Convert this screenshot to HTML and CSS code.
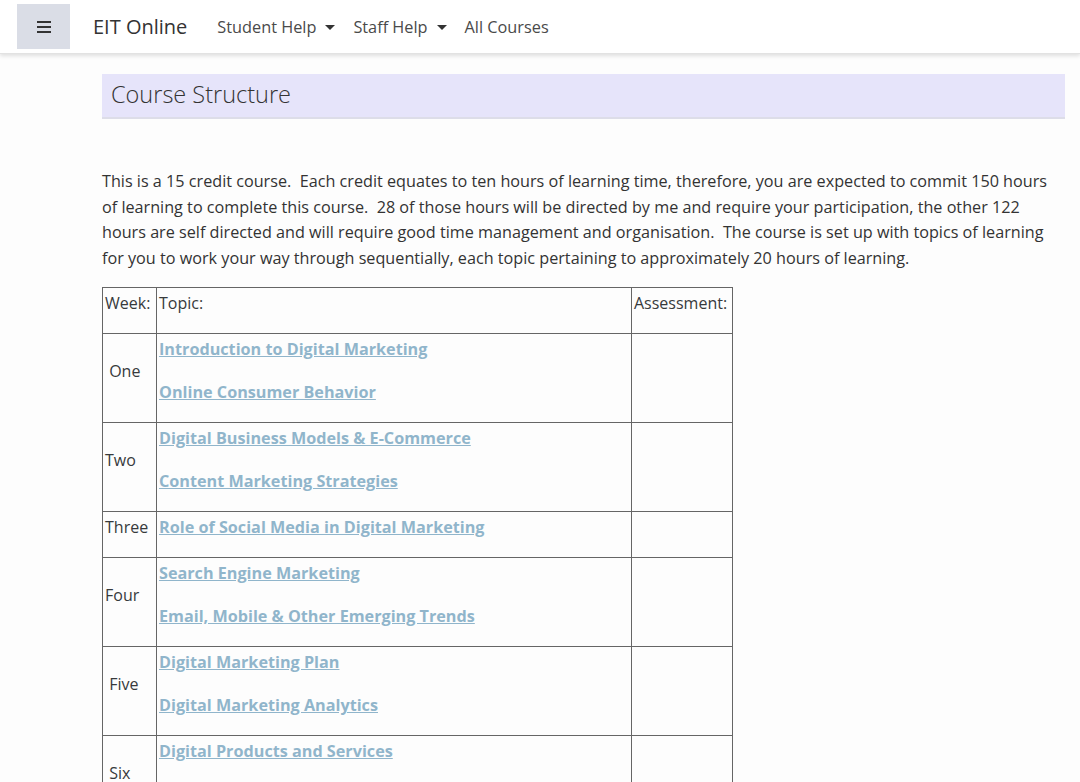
FILE: index.html
```html
<!DOCTYPE html>
<html lang="en">
<head>
    <meta charset="UTF-8">
    <title>Course Structure</title>
    <link rel="stylesheet" href="styles.css">
</head>
<body>

    <nav class="navbar">
        <button class="drawer-toggle" aria-label="Menu">
            <span></span><span></span><span></span>
        </button>
        <a href="#" class="brand">EIT Online</a>
        <a href="#" class="nav-link dropdown">Student Help</a>
        <a href="#" class="nav-link dropdown">Staff Help</a>
        <a href="#" class="nav-link">All Courses</a>
    </nav>

    <main class="content">
        <h2 class="section-title">Course Structure</h2>

        <p class="intro">This is a 15 credit course.&nbsp; Each credit equates to ten hours of learning time, therefore, you are expected to commit 150 hours of learning to complete this course.&nbsp; 28 of those hours will be directed by me and require your participation, the other 122 hours are self directed and will require good time management and organisation.&nbsp; The course is set up with topics of learning for you to work your way through sequentially, each topic pertaining to approximately 20 hours of learning.</p>

        <table class="structure">
            <tr class="head">
                <td class="week"><p>Week:</p></td>
                <td class="topic"><p>Topic:</p></td>
                <td class="assess"><p>Assessment:</p></td>
            </tr>
            <tr>
                <td class="week"><p>&nbsp;One</p></td>
                <td class="topic">
                    <p><a href="#">Introduction to Digital Marketing</a></p>
                    <p><a href="#">Online Consumer Behavior</a></p>
                </td>
                <td></td>
            </tr>
            <tr>
                <td class="week"><p>Two</p></td>
                <td class="topic">
                    <p><a href="#">Digital Business Models &amp; E-Commerce</a></p>
                    <p><a href="#">Content Marketing Strategies</a></p>
                </td>
                <td></td>
            </tr>
            <tr>
                <td class="week"><p>Three</p></td>
                <td class="topic">
                    <p><a href="#">Role of Social Media in Digital Marketing</a></p>
                </td>
                <td></td>
            </tr>
            <tr>
                <td class="week"><p>Four</p></td>
                <td class="topic">
                    <p><a href="#">Search Engine Marketing</a></p>
                    <p><a href="#">Email, Mobile &amp; Other Emerging Trends</a></p>
                </td>
                <td></td>
            </tr>
            <tr>
                <td class="week"><p>&nbsp;Five</p></td>
                <td class="topic">
                    <p><a href="#">Digital Marketing Plan</a></p>
                    <p><a href="#">Digital Marketing Analytics</a></p>
                </td>
                <td></td>
            </tr>
            <tr>
                <td class="week"><p>&nbsp;Six</p></td>
                <td class="topic">
                    <p><a href="#">Digital Products and Services</a></p>
                    <p><a href="#">Digital Marketing Careers</a></p>
                </td>
                <td></td>
            </tr>
        </table>
    </main>

</body>
</html>
```

FILE: styles.css
```css
body {
    font-family: 'Open Sans', 'Liberation Sans', sans-serif;
    font-size: 16px;
    color: #373a3c;
    background: #fdfdfd;
    margin: 0;
}

.navbar {
    display: flex;
    align-items: center;
    height: 54px;
    padding: 0 17px;
    background: #fff;
    box-shadow: 0 2px 4px rgba(0, 0, 0, 0.12);
    border-bottom: 1px solid #e2e2e2;
    box-sizing: border-box;
}

.drawer-toggle {
    width: 53px;
    height: 45px;
    background: #dadde6;
    border: none;
    display: flex;
    flex-direction: column;
    justify-content: center;
    align-items: center;
    gap: 3px;
    margin-right: 23px;
    cursor: pointer;
}

.drawer-toggle span {
    width: 14px;
    height: 2px;
    background: #333;
}

.brand {
    font-size: 20px;
    color: #333;
    text-decoration: none;
    margin-right: 30px;
}

.nav-link {
    color: #4a4a4a;
    text-decoration: none;
    font-size: 16.3px;
    margin-right: 18px;
}

.nav-link.dropdown::after {
    content: "";
    display: inline-block;
    margin-left: 9px;
    vertical-align: 3px;
    border-top: 5px solid #333;
    border-left: 5px solid transparent;
    border-right: 5px solid transparent;
}

.content {
    padding: 20px 15px 0 102px;
}

.section-title {
    margin: 0;
    height: 45px;
    padding: 0 9px 4px;
    box-sizing: border-box;
    display: flex;
    align-items: center;
    background: #e6e4fa;
    border-bottom: 2px solid #dddde8;
    font-size: 23.5px;
    font-weight: 300;
    color: #333;
}

.intro {
    margin: 50px 0 16px;
    line-height: 25.5px;
    font-size: 16.2px;
    color: #333;
}

.structure {
    border-collapse: collapse;
    width: 631px;
}

.structure td {
    border: 1px solid #666;
    padding: 3px 2px 0;
    vertical-align: middle;
}

.structure .head td {
    vertical-align: top;
}

.structure p {
    margin: 0 0 17px;
    line-height: 25px;
    white-space: nowrap;
}

.structure p + p {
    padding-top: 1px;
}

.week {
    width: 49px;
}

.assess {
    width: 96px;
}

.structure a {
    color: #90b5cb;
    font-weight: bold;
    font-size: 16.2px;
}
```
